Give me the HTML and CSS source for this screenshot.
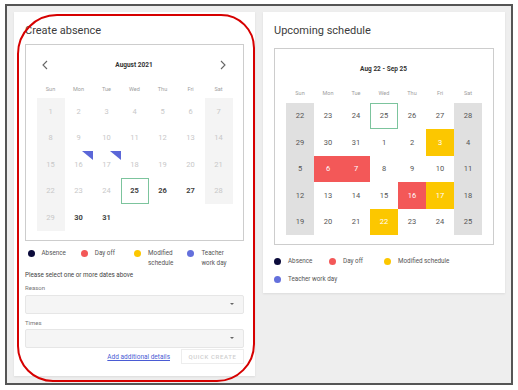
FILE: index.html
```html
<!DOCTYPE html>
<html lang="en">

<head>
    <meta charset="UTF-8">
    <meta name="viewport" content="width=device-width, initial-scale=1.0">
    <title>Absences</title>
    <link rel="stylesheet" href="styles.css">
</head>

<body>
    <div class="frame">
        <section class="card card-absence">
            <h2 class="card-title">Create absence</h2>
            <div class="calendar">
                <div class="cal-head">
                    <svg class="chevron" width="6" height="10" viewBox="0 0 6 10"><polyline points="5,1 1,5 5,9" /></svg>
                    <span class="cal-title">August 2021</span>
                    <svg class="chevron" width="6" height="10" viewBox="0 0 6 10"><polyline points="1,1 5,5 1,9" /></svg>
                </div>
                <div class="cal-days">
                    <span>Sun</span><span>Mon</span><span>Tue</span><span>Wed</span><span>Thu</span><span>Fri</span><span>Sat</span>
                </div>
                <div class="cal-grid picker">
                    <span class="we">1</span><span>2</span><span>3</span><span>4</span><span>5</span><span>6</span><span class="we">7</span>
                    <span class="we">8</span><span>9</span><span>10</span><span>11</span><span>12</span><span>13</span><span class="we">14</span>
                    <span class="we">15</span><span class="work">16</span><span class="work">17</span><span>18</span><span>19</span><span>20</span><span class="we">21</span>
                    <span class="we">22</span><span>23</span><span>24</span><span class="on today">25</span><span class="on">26</span><span class="on">27</span><span class="we">28</span>
                    <span class="we">29</span><span class="on">30</span><span class="on">31</span><span class="blank"></span><span class="blank"></span><span class="blank"></span><span class="blank"></span>
                </div>
            </div>

            <div class="legend legend-cols">
                <div class="legend-item"><i class="dot dot-absence"></i><span>Absence</span></div>
                <div class="legend-item"><i class="dot dot-off"></i><span>Day off</span></div>
                <div class="legend-item"><i class="dot dot-mod"></i><span>Modified schedule</span></div>
                <div class="legend-item"><i class="dot dot-work"></i><span>Teacher work day</span></div>
            </div>

            <p class="hint">Please select one or more dates above</p>

            <label class="field-label">Reason</label>
            <div class="select"><span class="caret"></span></div>

            <label class="field-label">Times</label>
            <div class="select select-times"><span class="caret"></span></div>

            <div class="actions">
                <a href="#" class="details-link">Add additional details</a>
                <button class="quick-btn" disabled>QUICK CREATE</button>
            </div>
        </section>

        <section class="card card-upcoming">
            <h2 class="card-title">Upcoming schedule</h2>
            <div class="calendar calendar-upcoming">
                <div class="cal-head center">
                    <span class="cal-title">Aug 22 - Sep 25</span>
                </div>
                <div class="cal-days">
                    <span>Sun</span><span>Mon</span><span>Tue</span><span>Wed</span><span>Thu</span><span>Fri</span><span>Sat</span>
                </div>
                <div class="cal-grid schedule">
                    <span class="we">22</span><span>23</span><span>24</span><span class="today">25</span><span>26</span><span>27</span><span class="we">28</span>
                    <span class="we">29</span><span>30</span><span>31</span><span>1</span><span>2</span><span class="mod">3</span><span class="we">4</span>
                    <span class="we">5</span><span class="off">6</span><span class="off">7</span><span>8</span><span>9</span><span>10</span><span class="we">11</span>
                    <span class="we">12</span><span>13</span><span>14</span><span>15</span><span class="off">16</span><span class="mod">17</span><span class="we">18</span>
                    <span class="we">19</span><span>20</span><span>21</span><span class="mod">22</span><span>23</span><span>24</span><span class="we">25</span>
                </div>
            </div>

            <div class="legend legend-wrap">
                <div class="legend-item"><i class="dot dot-absence"></i><span>Absence</span></div>
                <div class="legend-item"><i class="dot dot-off"></i><span>Day off</span></div>
                <div class="legend-item"><i class="dot dot-mod"></i><span>Modified schedule</span></div>
                <div class="legend-item"><i class="dot dot-work"></i><span>Teacher work day</span></div>
            </div>
        </section>

        <div class="annotation"></div>
    </div>
</body>

</html>
```

FILE: styles.css
```css
* {
    box-sizing: border-box;
    margin: 0;
    padding: 0;
    font-family: Roboto, "Liberation Sans", sans-serif;
}

body {
    background: #ffffff;
}

.frame {
    position: relative;
    display: flex;
    align-items: flex-start;
    gap: 8px;
    width: 508px;
    height: 381px;
    margin: 4px 0 0 5px;
    padding: 6px 6px 0 7px;
    background: #eeeeee;
    border: 2px solid #555555;
}

.card {
    background: #ffffff;
    padding: 11px 11px 11.5px;
    box-shadow: 0px 1px 2px rgba(0, 0, 0, 0.08);
}

.card-absence {
    width: 241px;
}

.card-upcoming {
    width: 242px;
    padding-bottom: 9px;
}

.card-title {
    font-size: 11px;
    line-height: 16px;
    font-weight: 400;
    color: #3c3c3c;
}

/* calendars */

.calendar {
    margin-top: 4.5px;
    padding: 13px 0 9px;
    border: 1px solid #cdcdcd;
}

.calendar-upcoming {
    margin-top: 9px;
}

.cal-head {
    display: flex;
    align-items: center;
    justify-content: space-between;
    height: 14px;
    padding: 0 17px 0 16px;
}

.cal-head.center {
    justify-content: center;
}

.cal-title {
    font-size: 6.5px;
    font-weight: 700;
    color: #333333;
}

.chevron polyline {
    fill: none;
    stroke: #666666;
    stroke-width: 1.1;
}

.cal-days {
    display: grid;
    grid-template-columns: repeat(7, 28px);
    width: 196px;
    margin: 12px auto 0;
    line-height: 10px;
    font-size: 5.5px;
    color: #9e9e9e;
    text-align: center;
}

.cal-grid {
    display: grid;
    grid-template-columns: repeat(7, 28px);
    grid-auto-rows: 26.5px;
    width: 196px;
    margin: 4.5px auto 0;
}

.cal-grid span {
    position: relative;
    display: flex;
    align-items: center;
    justify-content: center;
    font-size: 7.5px;
}

.picker span {
    color: #c8c8c8;
}

.picker .we {
    background: #f4f4f4;
}

.picker .on {
    color: #444444;
    font-weight: 700;
}

.picker .work::after {
    content: "";
    position: absolute;
    top: 0;
    right: 0;
    border-top: 9px solid #5b67d8;
    border-left: 11px solid transparent;
}

.schedule span {
    color: #555555;
}

.schedule .we {
    background: #e0e0e0;
}

.schedule .off {
    background: #f35858;
    color: #ffffff;
}

.schedule .mod {
    background: #fcc700;
    color: #ffffff;
}

.cal-grid .today {
    border: 1px solid #7cc49d;
}

/* legends */

.legend-item {
    display: flex;
    align-items: flex-start;
    gap: 7px;
    font-size: 6.3px;
    line-height: 10px;
    color: #555555;
}

.dot {
    flex: none;
    width: 7px;
    height: 7px;
    margin-top: 1.5px;
    border-radius: 50%;
}

.dot-absence {
    background: #0b0b3b;
}

.dot-off {
    background: #f35858;
}

.dot-mod {
    background: #fcc700;
}

.dot-work {
    background: #6470dc;
}

.legend-cols {
    display: grid;
    grid-template-columns: repeat(4, 53.3px);
    margin-top: 7.5px;
}

.legend-cols .dot {
    margin-left: 2.5px;
}

.legend-wrap {
    display: flex;
    flex-wrap: wrap;
    row-gap: 8px;
    margin-top: 11px;
}

.legend-wrap .legend-item {
    min-width: 55px;
}

/* form */

.hint {
    margin-top: 1.5px;
    font-size: 6.3px;
    line-height: 10px;
    color: #444444;
}

.field-label {
    display: block;
    margin-top: 3px;
    font-size: 6px;
    line-height: 10px;
    color: #777777;
}

.select {
    display: flex;
    align-items: center;
    justify-content: flex-end;
    height: 19.5px;
    margin-top: 2px;
    padding-right: 9px;
    background: #f5f5f5;
    border: 1px solid #e6e6e6;
    border-radius: 2px;
}

.caret {
    border-top: 2.5px solid #666666;
    border-left: 2.5px solid transparent;
    border-right: 2.5px solid transparent;
}

.field-label + .select-times {
    margin-top: 1px;
}

.select + .field-label {
    margin-top: 3.5px;
}

.actions {
    display: flex;
    align-items: center;
    justify-content: flex-end;
    gap: 11px;
    margin-top: 1px;
}

.details-link {
    font-size: 6.5px;
    color: #4a5bd4;
    text-decoration: underline;
}

.quick-btn {
    width: 63px;
    height: 15px;
    background: #ffffff;
    border: 1px solid #ededed;
    font-size: 6px;
    font-weight: 500;
    letter-spacing: 0.6px;
    color: #cfcfcf;
}

/* red marker drawn over the left card */

.annotation {
    position: absolute;
    left: 9.5px;
    top: 8px;
    width: 238.5px;
    height: 368px;
    border: 2.5px solid #d60000;
    border-radius: 40px 34px 38px 36px;
    pointer-events: none;
}
```
